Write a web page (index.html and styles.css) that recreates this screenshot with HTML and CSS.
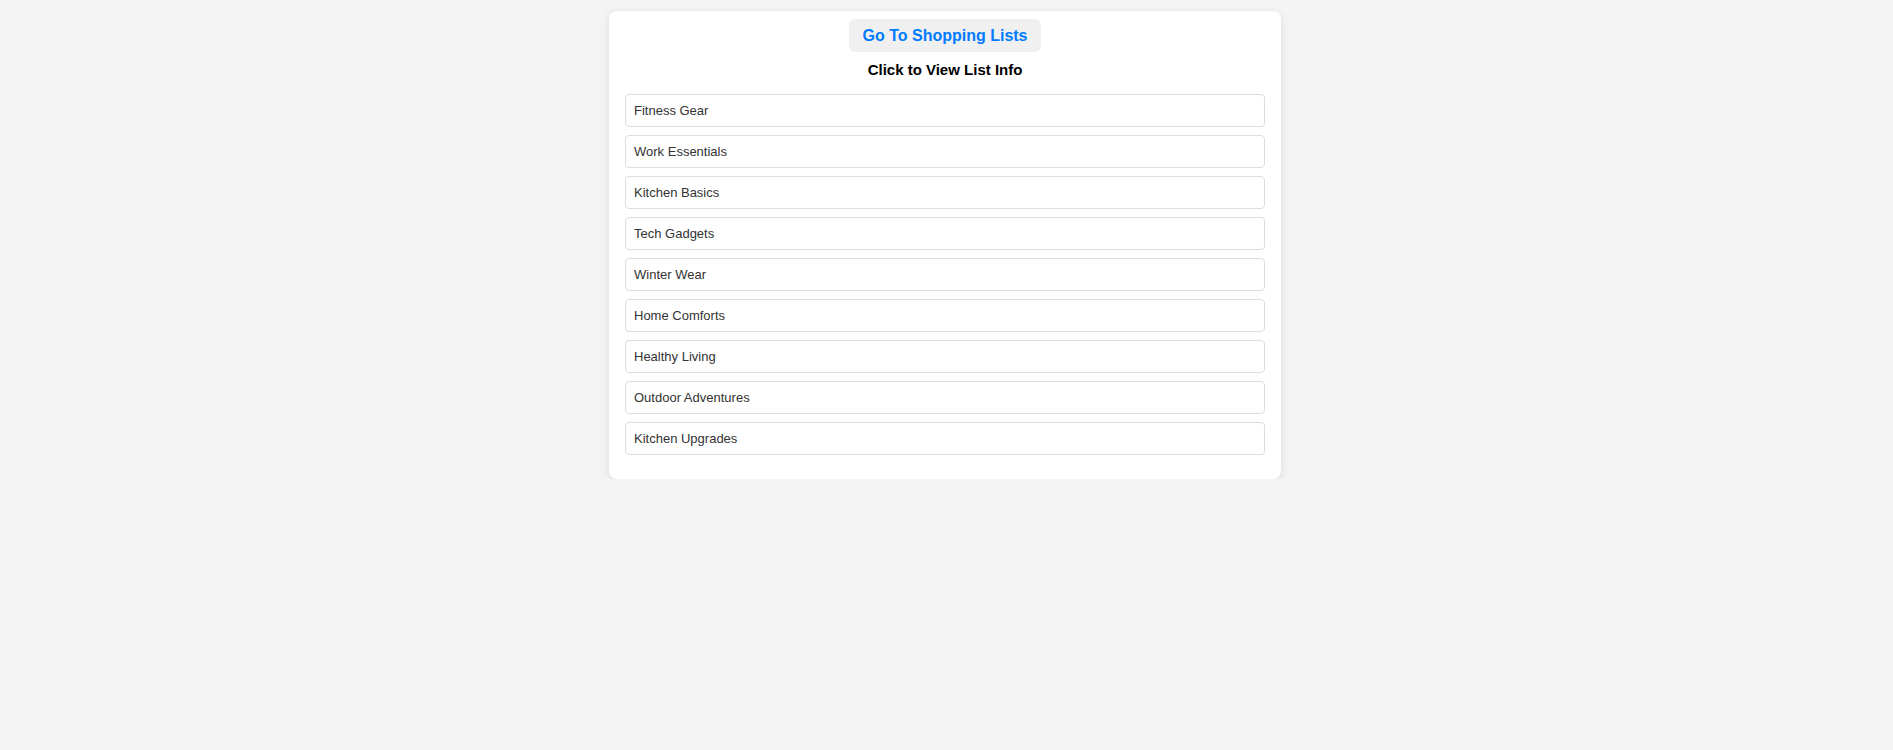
FILE: index.html
```html
<!DOCTYPE html>
<html lang="en">
<head>
<meta charset="utf-8">
<title>Shopping Lists</title>
<link rel="stylesheet" href="styles.css">
</head>
<body>
<div class="card">
  <button class="nav-btn">Go To Shopping Lists</button>
  <h3 class="title">Click to View List Info</h3>
  <ul class="lists">
    <li class="list-item">Fitness Gear</li>
    <li class="list-item">Work Essentials</li>
    <li class="list-item">Kitchen Basics</li>
    <li class="list-item">Tech Gadgets</li>
    <li class="list-item">Winter Wear</li>
    <li class="list-item">Home Comforts</li>
    <li class="list-item">Healthy Living</li>
    <li class="list-item">Outdoor Adventures</li>
    <li class="list-item">Kitchen Upgrades</li>
  </ul>
</div>
</body>
</html>
```

FILE: styles.css
```css
html, body {
  margin: 0;
  padding: 0;
  background: #f4f4f4;
  font-family: "Liberation Sans", Arial, sans-serif;
}
body {
  padding-top: 11px;
  padding-right: 3px;
}
.card {
  width: 640px;
  margin: 0 auto;
  padding: 8px 16px 16px;
  background: #ffffff;
  border-radius: 8px;
  box-shadow: 0 2px 8px rgba(0, 0, 0, 0.1);
  display: flex;
  flex-direction: column;
}
.nav-btn {
  align-self: center;
  font-family: "Liberation Sans", Arial, sans-serif;
  font-size: 16px;
  font-weight: bold;
  line-height: 19px;
  color: #007bff;
  background: #f0f0f0;
  border: none;
  border-radius: 6px;
  padding: 7px 13px;
  cursor: pointer;
}
.title {
  margin: 9px 0 16px;
  font-size: 15px;
  line-height: 17px;
  font-weight: bold;
  text-align: center;
  color: #000;
}
.lists {
  list-style: none;
  margin: 0;
  padding: 0;
  display: flex;
  flex-direction: column;
  gap: 8px;
  margin-bottom: 8px;
}
.list-item {
  border: 1px solid #dddddd;
  border-radius: 4px;
  padding: 8px;
  font-size: 13px;
  line-height: 15px;
  color: #333333;
  cursor: pointer;
}
```
